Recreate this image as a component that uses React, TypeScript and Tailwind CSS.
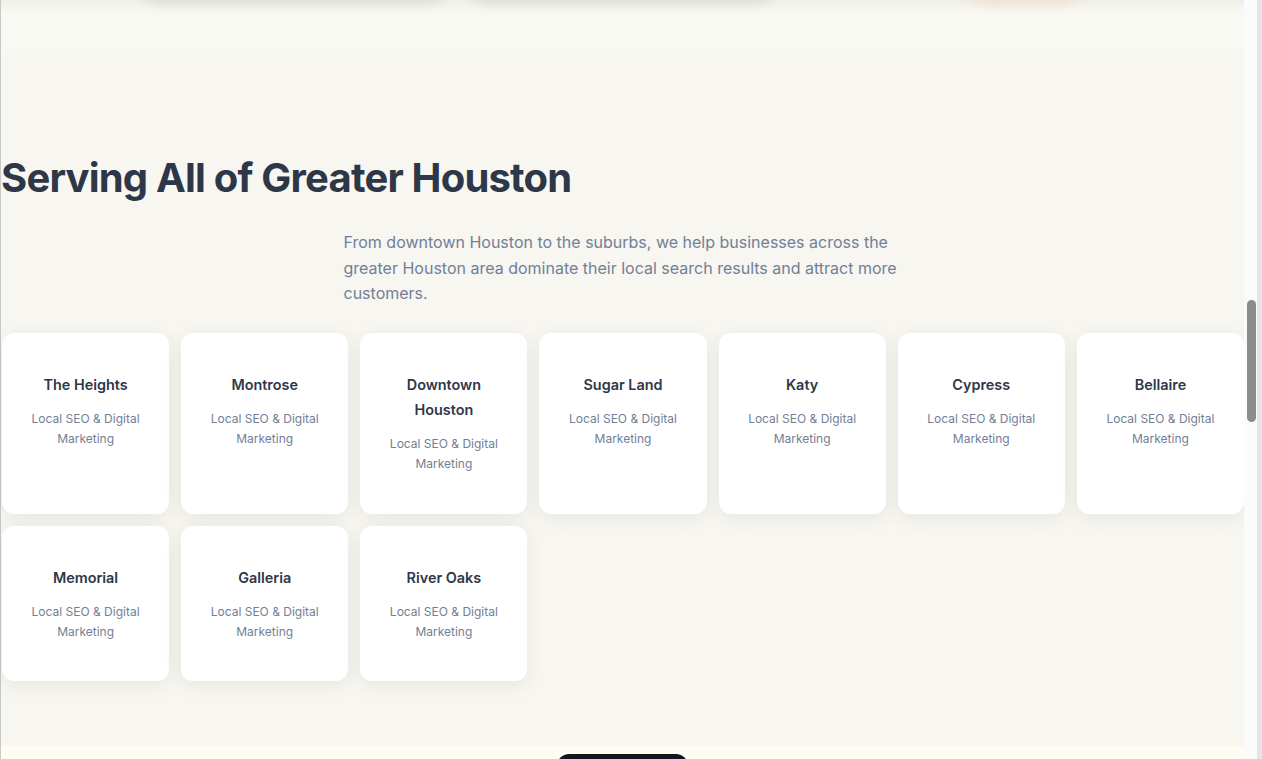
import React from "react";

const areas = [
  "The Heights",
  "Montrose",
  "Downtown Houston",
  "Sugar Land",
  "Katy",
  "Cypress",
  "Bellaire",
  "Memorial",
  "Galleria",
  "River Oaks",
];

export default function App() {
  return (
    <div className="flex h-[759px] w-full overflow-hidden bg-white font-['Inter',sans-serif]">
      {/* Page */}
      <div className="flex w-[1244px] flex-col border-l border-[#c9c9c9]">
        {/* Tail of previous section */}
        <section className="relative h-[50px] shrink-0 bg-[linear-gradient(to_bottom,#efefe8_0px,#f9f9f3_12px)]">
          <div className="-mt-[60px] flex gap-[30px] pl-[144px]">
            <div className="h-[60px] w-[298px] rounded-xl bg-white shadow-[0_4px_14px_rgba(0,0,0,0.08)]" />
            <div className="h-[60px] w-[298px] rounded-xl bg-white shadow-[0_4px_14px_rgba(0,0,0,0.08)]" />
            <div className="ml-[160px] h-[60px] w-[125px] rounded-full bg-[#f9f9f3] shadow-[0_4px_16px_rgba(239,120,90,0.16)]" />
          </div>
        </section>

        {/* Service areas */}
        <section className="flex-1 bg-[#f7f6f1] pb-16 pt-[104px]">
          <h2 className="text-[40px] font-bold leading-[1.2] tracking-[-0.02em] text-[#2d3748]">
            Serving All of Greater Houston
          </h2>
          <p className="mx-auto mt-7 max-w-[558px] text-base leading-[1.6] text-[#718096]">
            From downtown Houston to the suburbs, we help businesses across the greater Houston area dominate their
            local search results and attract more customers.
          </p>

          <div className="mt-[26px] grid grid-cols-7 gap-3 pl-px">
            {areas.map((area) => (
              <div
                key={area}
                className="rounded-xl bg-white px-6 py-[39px] text-center shadow-[0_4px_20px_rgba(0,0,0,0.07)]"
              >
                <h3 className="mb-3 text-[14.4px] font-semibold leading-[25px] text-[#2d3748]">{area}</h3>
                <p className="text-xs leading-[1.7] text-[#718096]">Local SEO &amp; Digital Marketing</p>
              </div>
            ))}
          </div>
        </section>

        {/* Next section */}
        <section className="flex h-[13px] shrink-0 justify-center bg-[#fffcf3] pt-2">
          <div className="h-10 w-[131px] rounded-xl bg-[#14141c]" />
        </section>
      </div>

      {/* Scrollbar */}
      <div className="flex w-[18px] shrink-0">
        <div className="w-[13px] bg-[#fbfbfb] pl-[3px] pt-[300px]">
          <div className="h-[122px] w-[9px] rounded-full bg-[#8c8c8c]" />
        </div>
        <div className="w-[5px] bg-[#e4e4e4]" />
      </div>
    </div>
  );
}
